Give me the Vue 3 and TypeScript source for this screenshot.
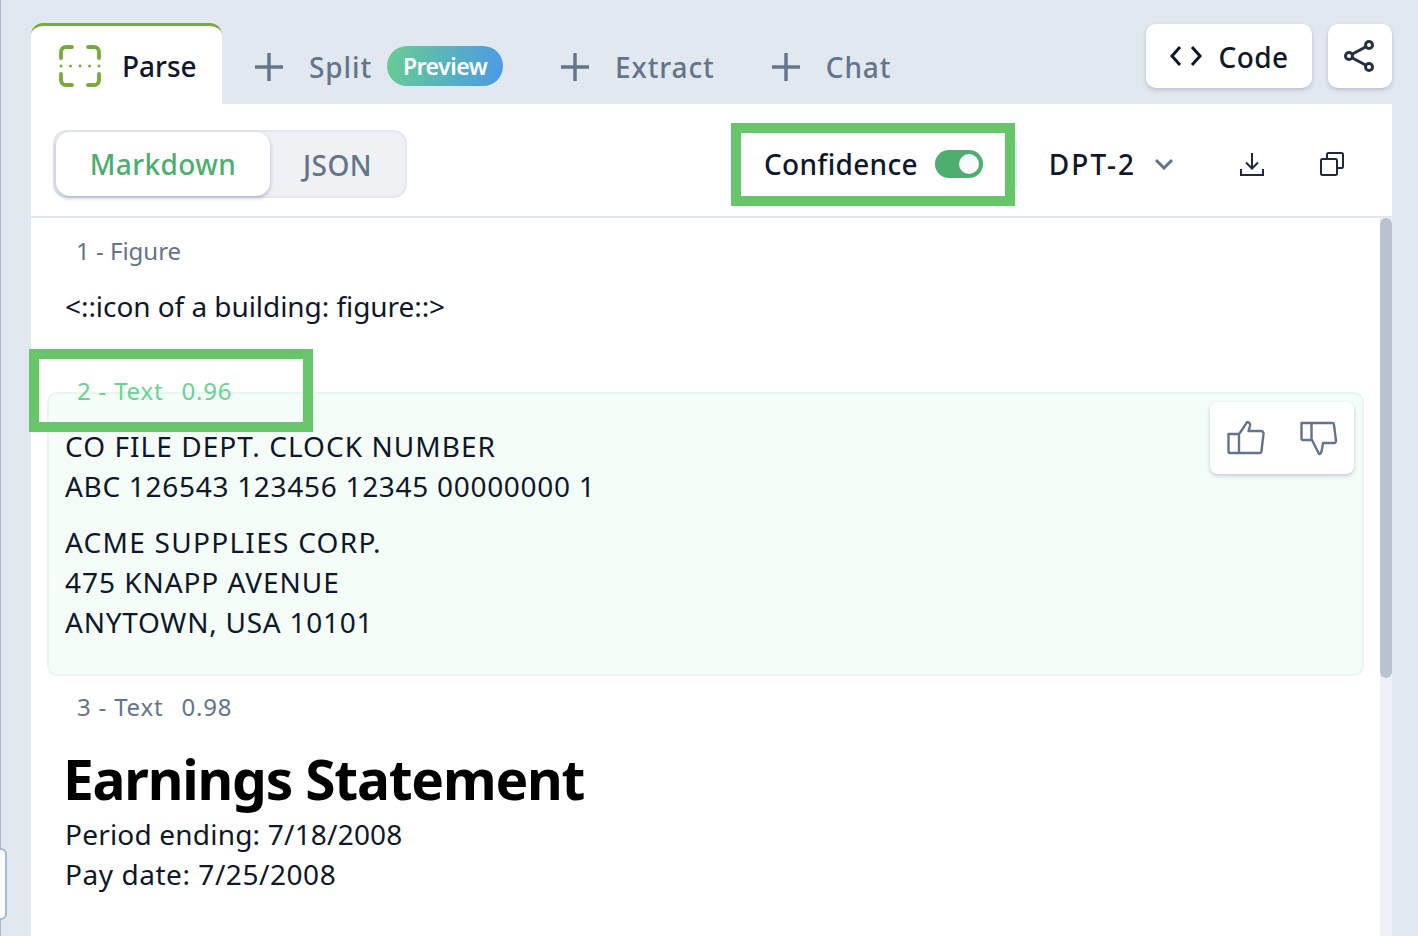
<script setup lang="ts">
const tabs = [
  { name: 'Split', preview: true },
  { name: 'Extract', preview: false },
  { name: 'Chat', preview: false },
]
</script>

<template>
  <div class="page">
    <div class="rail"></div>
    <div class="handle"></div>
    <main class="panel">
      <header class="tabbar">
        <div class="tab active">
          <svg class="parse-icon" width="42" height="42" viewBox="0 0 42 42" fill="none" stroke="#7aa93c" stroke-width="3.800" stroke-linecap="round">
            <path d="M2 13V7a5 5 0 0 1 5-5h6M29 2h6a5 5 0 0 1 5 5v6M40 29v6a5 5 0 0 1-5 5h-6M13 40H7a5 5 0 0 1-5-5v-6" />
            <path d="M2 21h.01M11.500 21h.01M21 21h.01M30.500 21h.01M40 21h.01" stroke-width="3" />
          </svg>
          <span>Parse</span>
        </div>
        <div v-for="t in tabs" :key="t.name" class="tab" :class="{ 'has-pill': t.preview }">
          <svg class="plus" width="28" height="28" viewBox="0 0 28 28" stroke="#64748b" stroke-width="3.400" fill="none"><path d="M14 0v28M0 14h28" /></svg>
          <span class="tab-name">{{ t.name }}</span>
          <span v-if="t.preview" class="pill">Preview</span>
        </div>
        <div class="actions">
          <button class="btn code">
            <svg width="32" height="22" viewBox="0 0 32 22" fill="none" stroke="#0f172a" stroke-width="3"><path d="M10 2 2 11l8 9M22 2l8 9-8 9" /></svg>
            <span class="code-label">Code</span>
          </button>
          <button class="btn share">
            <svg width="32" height="34" viewBox="0 0 32 34" fill="none" stroke="#27303f" stroke-width="3"><circle cx="25" cy="6" r="3.500" /><circle cx="5" cy="17" r="3.500" /><circle cx="25" cy="28" r="3.500" /><path d="M8 15.300 22 7.700M8 18.700l14 7.600" /></svg>
          </button>
        </div>
      </header>

      <section class="toolbar">
        <div class="segment">
          <div class="seg on">Markdown</div>
          <div class="seg">JSON</div>
        </div>
        <div class="tools">
          <span class="conf">Confidence</span>
          <span class="toggle"><i></i></span>
          <span class="divider"></span>
          <span class="model">DPT-2</span>
          <svg class="chev" width="20" height="12" viewBox="0 0 20 12" fill="none" stroke="#64748b" stroke-width="3"><path d="M2 2l8 8 8-8" /></svg>
          <svg class="dl" width="24" height="24" viewBox="0 0 24 24" fill="none" stroke="#1e293b" stroke-width="2"><path d="M12 1v15M6 10.500l6 6 6-6M1 17v6h22v-6" /></svg>
          <svg class="cp" width="24" height="24" viewBox="0 0 24 24" fill="none" stroke="#1e293b" stroke-width="2"><rect x="1" y="7" width="16" height="16" rx="1.500" /><path d="M7 7V2.500A1.500 1.500 0 0 1 8.500 1h13A1.500 1.500 0 0 1 23 2.500v12a1.500 1.500 0 0 1-1.500 1.500H17" /></svg>
        </div>
      </section>

      <section class="content">
        <div class="doc">
          <div class="label first">1 - Figure</div>
          <p class="para fig">&lt;::icon of a building: figure::&gt;</p>

          <div class="label green"><span>2 - Text</span><span>0.96</span></div>
          <div class="chunk">
            <p class="para"><span class="l1">CO FILE DEPT. CLOCK NUMBER</span><br /><span class="l2">ABC 126543 123456 12345 00000000 1</span></p>
            <p class="para"><span class="l3">ACME SUPPLIES CORP.</span><br /><span class="l4">475 KNAPP AVENUE</span><br /><span class="l5">ANYTOWN, USA 10101</span></p>
            <div class="feedback">
              <svg width="38" height="34" viewBox="0 0 38 34" fill="none" stroke="#64748b" stroke-width="2.400" stroke-linejoin="round"><path d="M1.500 13h10.500v19H3a1.500 1.500 0 0 1-1.500-1.500zM12 13l5-7 3-5c2 0 3.500 1.500 3 4l-1.500 5H34a2.500 2.500 0 0 1 2.500 3l-2 16.500a2 2 0 0 1-2 2.500H12" /></svg>
              <svg class="down" width="38" height="36" viewBox="0 0 38 36" fill="none" stroke="#64748b" stroke-width="2.400" stroke-linejoin="round"><path d="M1.500 2h10v17H3a1.500 1.500 0 0 1-1.500-1.500zM11.500 2H32a2 2 0 0 1 2 1.800l2 16a2 2 0 0 1-2 2.200H23l-1 6c-.3 2-.5 5-3 5l-7.500-15" /></svg>
            </div>
          </div>

          <div class="label"><span>3 - Text</span><span>0.98</span></div>
          <h1>Earnings Statement</h1>
          <p class="para"><span class="p1">Period ending: 7/18/2008</span><br /><span class="p2">Pay date: 7/25/2008</span></p>
        </div>
        <div class="scrollbar"><div class="thumb"></div></div>
      </section>
    </main>
    <div class="frame frame-conf"></div>
    <div class="frame frame-label"></div>
  </div>
</template>

<style>
html, body { margin: 0; overflow: hidden; }
</style>

<style scoped>
.page {
  position: relative;
  width: 1418px;
  height: 936px;
  overflow: hidden;
  background: #e2e8f0;
  font-family: "Noto Sans", "Open Sans", sans-serif;
  color: #0f172a;
}
.rail { position: absolute; left: 0; top: 0; bottom: 0; width: 1px; background: #a9b9d2; }
.handle {
  position: absolute; left: -9px; top: 848px; width: 12px; height: 68px;
  background: #f8fafc; border: 2px solid #a9b9d2; border-radius: 6px;
}
.panel { position: absolute; left: 31px; top: 0; width: 1361px; height: 936px; display: flex; flex-direction: column; }
.tabbar { height: 104px; flex: none; display: flex; align-items: flex-end; }
.tab {
  height: 74px; display: flex; align-items: center; gap: 26px;
  font-size: 28px; font-weight: 500; color: #64748b; margin-right: 57px;
}
.tab-name { letter-spacing: .9px; }
.tab.has-pill { margin-right: 58px; }
.tab.has-pill .pill { margin-left: -11px; margin-top: -2px; }
.tab.active {
  width: 191px; height: 81px; box-sizing: border-box; background: #fff; color: #0f172a;
  border-top: 3px solid #7aa93c; border-radius: 12px 12px 0 0; padding: 2px 0 0 28px; gap: 21px; margin-right: 33px;
}
.plus { flex: none; }
.pill {
  width: 116px; height: 40px; border-radius: 20px; display: flex; align-items: center; justify-content: center;
  background: linear-gradient(100deg, #68cd92, #4b99e8); color: #fff; font-size: 23px; font-weight: 600; letter-spacing: -0.5px;
}
.actions { margin-left: auto; display: flex; gap: 16px; align-self: flex-start; margin-top: 24px; }
.btn {
  height: 64px; border: 0; background: #fff; border-radius: 10px; box-shadow: 0 2px 4px rgba(100, 116, 139, .35);
  display: flex; align-items: center; justify-content: center; font: inherit; color: #0f172a; padding: 0;
}
.code { width: 166px; gap: 17px; font-size: 28px; font-weight: 500; letter-spacing: 0.4px; }
.code-label { padding-top: 2px; }
.share { width: 64px; }
.toolbar {
  height: 114px; flex: none; box-sizing: border-box; background: #fff; border-bottom: 2px solid #e2e8f0;
  display: flex; align-items: center; padding: 8px 48px 0 22px; justify-content: space-between;
}
.segment {
  width: 354px; height: 68px; box-sizing: border-box; display: flex; align-items: center; background: #eff1f5;
  border: 2px solid #e2e8f0; border-radius: 14px; padding-left: 1px; font-size: 28px; font-weight: 500;
}
.seg { text-align: center; color: #64748b; flex: 1; letter-spacing: .4px; padding-top: 1px; }
.seg.on {
  flex: none; width: 214px; height: 64px; line-height: 64px; padding-top: 0; background: #fff; color: #4dae6f; border-radius: 14px;
  box-shadow: 0 2px 4px rgba(100, 116, 139, .45);
}
.tools { display: flex; align-items: center; font-size: 28px; font-weight: 500; }
.conf { letter-spacing: .3px; }
.model { letter-spacing: 2px; }
.toggle {
  width: 48px; height: 28px; border-radius: 14px; background: #4dae6f; margin-left: 17px; display: flex; align-items: center; justify-content: flex-end; padding-right: 4px; box-sizing: border-box;
}
.toggle i { width: 20px; height: 20px; border-radius: 50%; background: #f8fafc; }
.divider { width: 2px; height: 48px; background: #e2e8f0; margin: 0 32px; }
.chev { margin-left: 18px; }
.dl { margin-left: 66px; }
.cp { margin-left: 56px; }
.content { flex: 1; min-height: 0; display: flex; background: #fff; }
.doc { flex: 1; min-width: 0; padding: 0 16px; }
.label {
  display: flex; gap: 18px; height: 34px; line-height: 34px; font-size: 24px; color: #64748b; padding-left: 30px; margin-top: 14px;
}
.label span { letter-spacing: .8px; }
.label.first { margin-top: 16px; padding-left: 29px; }
.label.green { color: #68d391; position: relative; z-index: 1; margin-top: 48px; }
.para { margin: 0 0 16px; font-size: 28px; line-height: 40px; padding-left: 18px; }
.para.fig { margin: 18px 0 0; letter-spacing: -.06px; }
.chunk {
  position: relative; margin: -16px 0 0; box-sizing: border-box; height: 284px; background: #f5fdf9;
  border: 2px solid #e6f8ee; border-radius: 10px; padding-top: 32px;
}
.chunk .para { padding-left: 16px; }
.l1 { letter-spacing: 1.050px; }
.l2 { letter-spacing: .7px; }
.l3 { letter-spacing: 1.270px; }
.l4 { letter-spacing: .95px; }
.l5 { letter-spacing: .75px; }
.feedback {
  position: absolute; right: 8px; top: 8px; width: 144px; height: 72px; background: #fff; border-radius: 8px;
  box-shadow: 0 2px 4px rgba(100, 116, 139, .35); display: flex; align-items: center; justify-content: center; gap: 35px;
}
.down { margin-top: 2px; }
h1 { margin: 23px 0 0; padding-left: 16px; font-size: 55px; line-height: 64px; font-weight: 700; color: #000; letter-spacing: -1.200px; }
h1 + .para { margin-top: 3px; }
.p1 { letter-spacing: .2px; }
.p2 { letter-spacing: .55px; }
.scrollbar { width: 12px; background: #eef2f7; flex: none; }
.thumb { height: 460px; background: #b9c2d3; border-radius: 6px; }
.frame { position: absolute; border: 10px solid #66c669; box-sizing: border-box; pointer-events: none; }
.frame-conf { left: 731px; top: 123px; width: 284px; height: 83px; }
.frame-label { left: 29px; top: 349px; width: 284px; height: 83px; }
</style>
